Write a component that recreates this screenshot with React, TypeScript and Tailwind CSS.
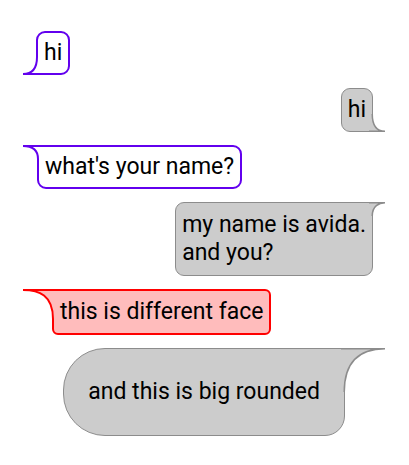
import React from "react";

type TailProps = {
  w: number;
  h: number;
  c1: number;
  c2: number;
  fill: string;
  stroke: string;
  sw: number;
  flipX?: boolean;
  flipY?: boolean;
  className: string;
};

// tail drawn for the top-left corner, mirrored for the other corners
const Tail = ({ w, h, c1, c2, fill, stroke, sw, flipX, flipY, className }: TailProps) => {
  const ov = 4;
  const W = w + ov;
  const t = sw / 2;
  const wc = w + sw / 2;
  const curve = `M0 ${t} C${c1} ${t} ${wc} ${c2} ${wc} ${h}`;
  const sx = flipX ? -1 : 1;
  const sy = flipY ? -1 : 1;
  const transform = `translate(${flipX ? W : 0} ${flipY ? h : 0}) scale(${sx} ${sy})`;
  return (
    <svg className={`absolute ${className}`} width={W} height={h} viewBox={`0 0 ${W} ${h}`}>
      <g transform={transform}>
        <path d={`${curve} L${W} ${h} L${W} ${t} Z`} fill={fill} />
        <path d={`${curve} M0 ${t} L${W} ${t}`} fill="none" stroke={stroke} strokeWidth={sw} />
      </g>
    </svg>
  );
};

const PURPLE = "#6200ee";
const GRAY_FILL = "#cccccc";
const GRAY_LINE = "#8c8c8c";

export default function App() {
  return (
    <div
      className="w-[409px] h-[465px] bg-white flex flex-col gap-[13px] pt-[31px] text-[23px] leading-[28px] text-black"
      style={{ fontFamily: "Roboto, 'Noto Sans', sans-serif" }}
    >
      {/* hi - left, tail bottom */}
      <div className="flex pl-[23px]">
        <div className="relative flex ml-[13px]">
          <div className="bg-white border-2 border-[#6200ee] rounded-[9px] rounded-bl-none px-[6px] py-[6px]">
            hi
          </div>
          <Tail w={13} h={18} c1={7} c2={4} fill="#ffffff" stroke={PURPLE} sw={2} flipY className="-left-[13px] bottom-0" />
        </div>
      </div>

      {/* hi - right, tail bottom */}
      <div className="flex justify-end pr-[24px]">
        <div className="relative flex mr-[12px]">
          <div className="bg-[#cccccc] border-[1.5px] border-[#8c8c8c] rounded-[9px] rounded-br-none px-[6px] py-[7px]">
            hi
          </div>
          <Tail w={12} h={18} c1={6} c2={4} fill={GRAY_FILL} stroke={GRAY_LINE} sw={1.5} flipX flipY className="-right-[12px] bottom-0" />
        </div>
      </div>

      {/* what's your name? - left, tail top */}
      <div className="flex pl-[23px]">
        <div className="relative flex ml-[14px]">
          <div className="bg-white border-2 border-[#6200ee] rounded-[9px] rounded-tl-none px-[6px] py-[6px]">
            what's your name?
          </div>
          <Tail w={14} h={14} c1={7} c2={3} fill="#ffffff" stroke={PURPLE} sw={2} className="-left-[14px] top-0" />
        </div>
      </div>

      {/* my name is avida. - right, tail top */}
      <div className="flex justify-end pr-[24px]">
        <div className="relative flex mr-[12px]">
          <div className="bg-[#cccccc] border-[1.5px] border-[#8c8c8c] rounded-[9px] rounded-tr-none px-[6px] py-[8px]">
            my name is avida.
            <br />
            and you?
          </div>
          <Tail w={12} h={14} c1={6} c2={4} fill={GRAY_FILL} stroke={GRAY_LINE} sw={1.5} flipX className="-right-[12px] top-0" />
        </div>
      </div>

      {/* different face - red */}
      <div className="flex pl-[23px]">
        <div className="relative flex ml-[29px]">
          <div className="bg-[#ffbcbc] border-2 border-[#ff0000] rounded-[6px] rounded-tl-none px-[6px] py-[7px]">
            this is different face
          </div>
          <Tail w={29} h={30} c1={16} c2={6} fill="#ffbcbc" stroke="#ff0000" sw={2} className="-left-[29px] top-0" />
        </div>
      </div>

      {/* big rounded */}
      <div className="flex justify-end pr-[24px]">
        <div className="relative flex mr-[40px]">
          <div className="bg-[#cccccc] border-[1.5px] border-[#8c8c8c] rounded-l-[42px] rounded-br-[20px] px-[24px] py-[29px]">
            and this is big rounded
          </div>
          <Tail w={40} h={44} c1={20} c2={8} fill={GRAY_FILL} stroke={GRAY_LINE} sw={1.5} flipX className="-right-[40px] top-0" />
        </div>
      </div>
    </div>
  );
}
